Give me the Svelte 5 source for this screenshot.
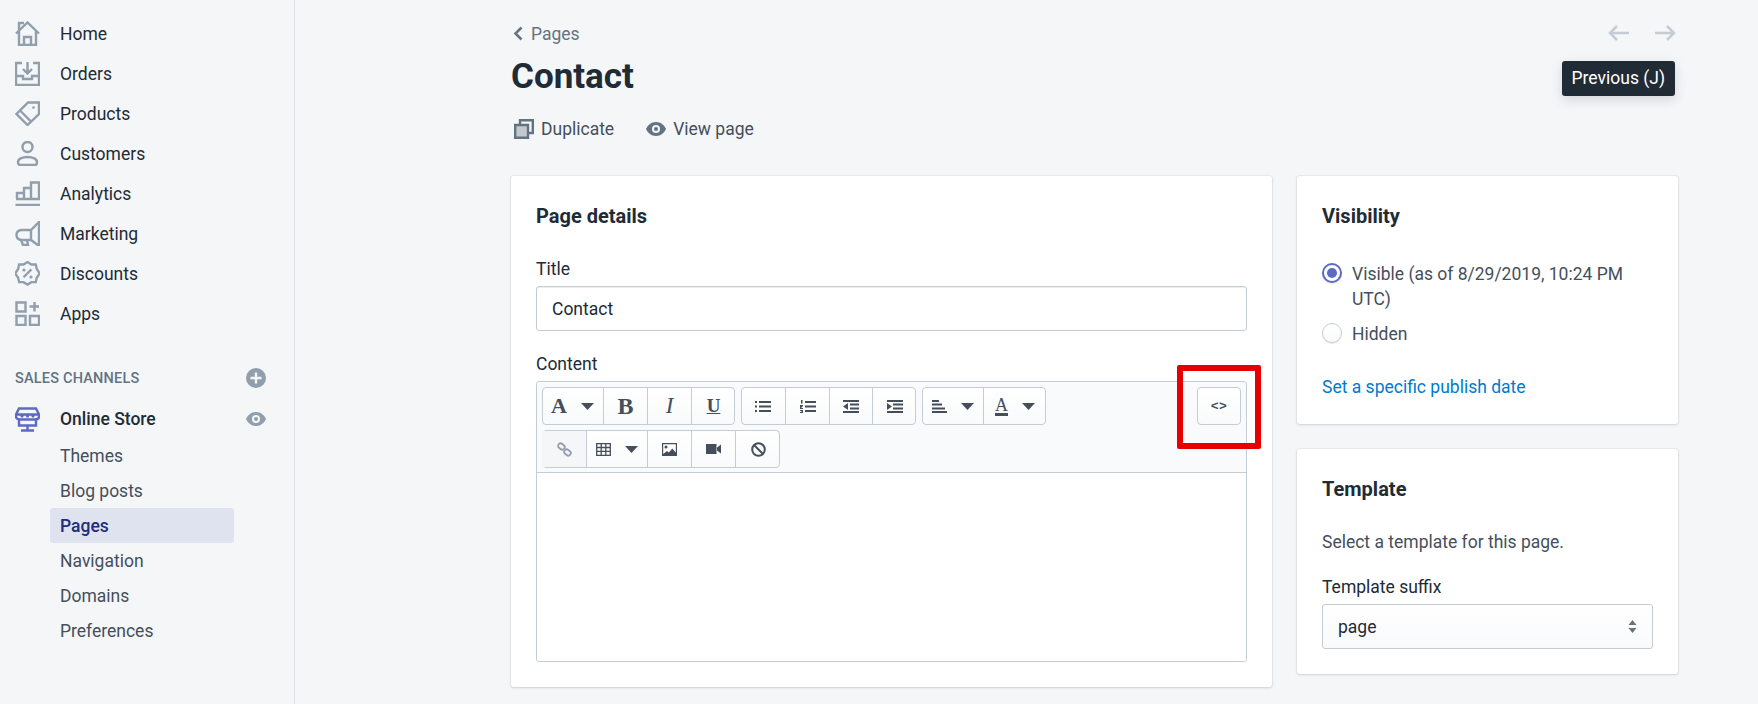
<script lang="ts">
	const navItems = [
		{ label: 'Home', icon: 'home' },
		{ label: 'Orders', icon: 'orders' },
		{ label: 'Products', icon: 'products' },
		{ label: 'Customers', icon: 'customers' },
		{ label: 'Analytics', icon: 'analytics' },
		{ label: 'Marketing', icon: 'marketing' },
		{ label: 'Discounts', icon: 'discounts' },
		{ label: 'Apps', icon: 'apps' }
	];

	const storeLinks = ['Themes', 'Blog posts', 'Pages', 'Navigation', 'Domains', 'Preferences'];
</script>

{#snippet caret()}
	<svg class="caret" width="13" height="7" viewBox="0 0 13 7"><path d="M0 0h13L6.500 7z" /></svg>
{/snippet}

<div class="page">
	<aside class="sidebar">
		<nav class="primary">
			{#each navItems as item}
				<div class="nav-item">
					<svg class="nav-icon" width="25" height="25" viewBox="0 0 25 25" fill="none">
						{#if item.icon === 'home'}
							<path d="M1 12.500 12.500 1.500 24 12.500M4 10v14h17V10M9 24v-8h7v8M4 9V2h5" />
						{:else if item.icon === 'orders'}
							<path d="M7 2H1v22h23V2h-6M1 15h7v3h9v-3h7M12.500 1v11M8 8l4.500 4.500L17 8" />
						{:else if item.icon === 'products'}
							<path d="M24 1.500H13L1.500 13 12.500 24 24 13zM5 9.500l11 11" />
							<circle cx="18.500" cy="6.500" r="1.300" fill="#919eab" stroke="none" />
						{:else if item.icon === 'customers'}
							<circle cx="12.500" cy="6" r="5" />
							<path d="M3 21c0-3 4-5 9.500-5s9.500 2 9.500 5c0 2-1 3-2 3H5c-1 0-2-1-2-3z" />
						{:else if item.icon === 'analytics'}
							<path d="M2 18v-6h7v6M9 18V7h7v11M16 18V1.500h8V18M1 18h24M0.500 24h24.500" />
						{:else if item.icon === 'marketing'}
							<path d="M24 1v24L16 19H6c-6-1-6-9 0-10h10zM16 9v10M6 19l2 5h5l-1-5" />
						{:else if item.icon === 'discounts'}
							<path d="M12.500 1l4 2.500h4.500l1 4.500 3 4.500-3 4.500-1 4.500h-4.500l-4 2.500-4-2.500H4l-1-4.500-3-4.500 3-4.500 1-4.500h4.500zM8.500 16.500l8-8" transform="translate(0.200 0.100) scale(.98)" />
							<circle cx="9" cy="9" r="1.600" fill="#919eab" stroke="none" />
							<circle cx="16" cy="16" r="1.600" fill="#919eab" stroke="none" />
						{:else}
							<path d="M1.500 1.500h9v9h-9zM1.500 15h9v9h-9zM15 15h9v9h-9zM19.500 1v9.500M14.500 5.500H24" />
						{/if}
					</svg>
					<span>{item.label}</span>
				</div>
			{/each}
		</nav>

		<div class="channels-head">
			<span>Sales channels</span>
			<svg width="20" height="20" viewBox="0 0 20 20">
				<circle cx="10" cy="10" r="10" fill="#919eab" />
				<path d="M10 4.500v11M4.500 10h11" stroke="#f4f6f8" stroke-width="2.400" />
			</svg>
		</div>

		<div class="store-row">
			<svg class="store-icon" width="25" height="25" viewBox="0 0 25 25" fill="none">
				<path d="M4 1.500h17l3 6v2c0 2-2 3-4 3H5c-2 0-4-1-4-3v-2zM1 7.500h23M4 12v6.500h17V12M12.500 18.500v5M6 23.500h13" />
				<path d="M5 8h4l-1 2.500H6zM10.500 8h4l-1 2.500h-2zM16 8h4l-1 2.500h-2z" fill="#5c6ac4" stroke="none" />
			</svg>
			<span class="store-name">Online Store</span>
			<svg width="20" height="14" viewBox="0 0 20 14">
				<path d="M10 0C5 0 1.500 3.500 0 7c1.500 3.500 5 7 10 7s8.500-3.500 10-7c-1.500-3.500-5-7-10-7z" fill="#919eab" />
				<circle cx="10" cy="7" r="4" fill="#f4f6f8" />
				<circle cx="10" cy="7" r="2" fill="#919eab" />
			</svg>
		</div>

		<ul class="store-links">
			{#each storeLinks as link}
				<li class:selected={link === 'Pages'}>{link}</li>
			{/each}
		</ul>
	</aside>

	<main class="content">
		<header class="page-head">
			<div class="breadcrumb-row">
				<div class="breadcrumb">
					<svg width="10" height="15" viewBox="0 0 10 15" fill="none"><path d="M8.500 1.500 2.500 7.500l6 6" stroke="#637381" stroke-width="2.500" /></svg>
					<span>Pages</span>
				</div>
				<div class="pager">
					<svg width="21" height="16" viewBox="0 0 21 16" fill="none"><path d="M21 8H2M9 1 2 8l7 7" /></svg>
					<svg width="21" height="16" viewBox="0 0 21 16" fill="none"><path d="M0 8h19M12 1l7 7-7 7" /></svg>
				</div>
			</div>
			<h1>Contact</h1>
			<div class="actions">
				<div class="action">
					<svg width="20" height="20" viewBox="0 0 20 20" fill="none" stroke="#637381" stroke-width="2.400">
						<path d="M6 5V1.200h12.800V14H15" />
						<path d="M1.200 6H14v12.800H1.200z" fill="#637381" fill-opacity=".35" />
					</svg>
					<span>Duplicate</span>
				</div>
				<div class="action">
					<svg width="20" height="14" viewBox="0 0 20 14">
						<path d="M10 0C5 0 1.500 3.500 0 7c1.500 3.500 5 7 10 7s8.500-3.500 10-7c-1.500-3.500-5-7-10-7z" fill="#637381" />
						<circle cx="10" cy="7" r="4" fill="#f4f6f8" />
						<circle cx="10" cy="7" r="2" fill="#637381" />
					</svg>
					<span>View page</span>
				</div>
			</div>
		</header>

		<div class="columns">
			<section class="card main-card">
				<h2>Page details</h2>
				<label class="field-label" for="title">Title</label>
				<div class="input" id="title">Contact</div>
				<div class="field-label content-label">Content</div>

				<div class="editor">
					<div class="toolbar">
						<div class="tool-rows">
							<div class="tool-row">
								<div class="group">
									<div class="tool w61 serif-tool"><b>A</b>{@render caret()}</div>
									<div class="tool w44 serif-tool b">B</div>
									<div class="tool w44 serif-tool i">I</div>
									<div class="tool w44 serif-tool u">U</div>
								</div>
								<div class="group">
									<div class="tool w44">
										<svg width="16" height="13" viewBox="0 0 16 13" fill="#454f5b"><path d="M0 1h2v2H0zM0 5.500h2v2H0zM0 10h2v2H0zM4 1h12v2H4zM4 5.500h12v2H4zM4 10h12v2H4z" /></svg>
									</div>
									<div class="tool w44">
										<svg width="16" height="13" viewBox="0 0 16 13" fill="#454f5b"><path d="M5 1h11v2H5zM5 5.500h11v2H5zM5 10h11v2H5zM1 0h1.500v3.500H1zM0 5h3v1L1 8h2v1H0zM0 10h3v3H0v-1h2v-.5H1v-.5h1V11H0z" /></svg>
									</div>
									<div class="tool w43">
										<svg width="16" height="13" viewBox="0 0 16 13" fill="#454f5b"><path d="M0 0h16v2H0zM7 3.500h9v2H7zM7 7.500h9v2H7zM0 11h16v2H0zM5 3v7L0 6.500z" /></svg>
									</div>
									<div class="tool w44">
										<svg width="16" height="13" viewBox="0 0 16 13" fill="#454f5b"><path d="M0 0h16v2H0zM6 3.500h10v2H6zM6 7.500h10v2H6zM0 11h16v2H0zM0 3v7l5-3.500z" /></svg>
									</div>
								</div>
								<div class="group">
									<div class="tool w61">
										<svg width="15" height="13" viewBox="0 0 15 13" fill="#454f5b"><path d="M0 0h7v2H0zM0 3.500h10v2H0zM0 7.500h13v2H0zM0 11h15v2H0z" /></svg>
										{@render caret()}
									</div>
									<div class="tool w63 serif-tool color"><span class="color-a">A</span>{@render caret()}</div>
								</div>
							</div>
							<div class="tool-row">
								<div class="group">
									<div class="tool w44 disabled">
										<svg width="15" height="15" viewBox="0 0 15 15" fill="none" stroke="#919eab" stroke-width="1.800"><rect x=".9" y="2" width="7" height="5" rx="2.500" transform="rotate(40 4.400 4.500)" /><rect x="7" y="8" width="7" height="5" rx="2.500" transform="rotate(40 10.500 10.500)" /></svg>
									</div>
									<div class="tool w61">
										<svg width="15" height="13" viewBox="0 0 15 13" fill="none" stroke="#454f5b" stroke-width="1.300"><path d="M.7.700h13.600v11.600H.7zM.7 4.500h13.600M.7 8.400h13.600M5.200.7v11.600M9.800.7v11.600" /></svg>
										{@render caret()}
									</div>
									<div class="tool w44">
										<svg width="15" height="13" viewBox="0 0 15 13"><path d="M0 0h15v13H0z" fill="#454f5b" /><path d="M1.200 1.200h12.600v8.300l-3.500-4-3.500 4-1.800-1.500-3.800 3z" fill="#fff" /><circle cx="4" cy="4" r="1.500" fill="#454f5b" /></svg>
									</div>
									<div class="tool w44">
										<svg width="15" height="10" viewBox="0 0 15 10" fill="#454f5b"><path d="M0 0h10.500v10H0zM11 3.500 15 .5v9l-4-3z" /></svg>
									</div>
									<div class="tool w45">
										<svg width="15" height="15" viewBox="0 0 15 15" fill="none" stroke="#454f5b" stroke-width="2"><circle cx="7.500" cy="7.500" r="6.300" /><path d="M3 3l9 9" /></svg>
									</div>
								</div>
							</div>
						</div>
						<div class="group code-group">
							<div class="tool w44 code">&lt;&gt;</div>
						</div>
					</div>
					<div class="editor-body"></div>
				</div>
			</section>

			<div class="side">
				<section class="card">
					<h2>Visibility</h2>
					<div class="radio-list">
						<div class="radio-row">
							<span class="radio checked"></span>
							<span class="radio-text">Visible (as of 8/29/2019, 10:24 PM UTC)</span>
						</div>
						<div class="radio-row">
							<span class="radio"></span>
							<span class="radio-text">Hidden</span>
						</div>
					</div>
					<a class="link" href="#top">Set a specific publish date</a>
				</section>

				<section class="card">
					<h2>Template</h2>
					<p class="hint">Select a template for this page.</p>
					<div class="field-label">Template suffix</div>
					<div class="select">
						<span>page</span>
						<svg width="9" height="13" viewBox="0 0 9 13" fill="#637381"><path d="M4.500 0 8.500 5h-8zM4.500 13 .5 8h8z" /></svg>
					</div>
				</section>
			</div>
		</div>

		<div class="tooltip">Previous (J)</div>
		<div class="highlight"></div>
	</main>
</div>

<style>
	:global(body) {
		margin: 0;
		background: #f4f6f8;
	}

	.page {
		display: flex;
		height: 704px;
		overflow: hidden;
		font-family: Roboto, 'Liberation Sans', sans-serif;
		font-size: 17.500px;
		color: #212b36;
	}

	.sidebar {
		width: 294px;
		flex-shrink: 0;
		border-right: 1px solid #dfe3e8;
		padding-top: 13px;
	}

	.nav-item {
		display: flex;
		align-items: center;
		gap: 20px;
		height: 40px;
		padding-left: 15px;
		color: #212b36;
	}

	.nav-item span {
		padding-top: 2px;
	}

	.nav-icon {
		stroke: #919eab;
		stroke-width: 2.400;
	}

	.channels-head {
		display: flex;
		justify-content: space-between;
		align-items: center;
		height: 20px;
		margin-top: 35px;
		padding: 0 28px 0 15px;
		font-size: 14.500px;
		font-weight: 500;
		letter-spacing: 0.2px;
		text-transform: uppercase;
		color: #637381;
	}

	.store-row {
		display: flex;
		align-items: center;
		height: 40px;
		margin-top: 11px;
		padding: 0 28px 0 15px;
	}

	.store-icon {
		stroke: #5c6ac4;
		stroke-width: 2.400;
		margin-right: 20px;
	}

	.store-name {
		flex: 1;
		font-weight: 500;
	}

	.store-links {
		list-style: none;
		margin: -1px 0 0 50px;
		padding: 0;
		width: 184px;
	}

	.store-links li {
		height: 35px;
		line-height: 37px;
		padding-left: 10px;
		color: #454f5b;
		border-radius: 3px;
	}

	.store-links li.selected {
		background: #dfe3f0;
		color: #202e78;
		font-weight: 500;
	}

	.content {
		position: relative;
		flex: 1;
		padding: 0 80px 0 216px;
	}

	.page-head {
		height: 176px;
	}

	.breadcrumb-row {
		display: flex;
		justify-content: space-between;
		align-items: center;
		height: 20px;
		padding-top: 23px;
	}

	.breadcrumb {
		display: flex;
		align-items: center;
		gap: 8px;
		padding-left: 2px;
		color: #637381;
	}

	.breadcrumb span {
		padding-top: 2px;
	}

	.pager {
		display: flex;
		gap: 26px;
		margin-right: 2px;
	}

	.pager svg {
		stroke: #c4cdd5;
		stroke-width: 2.500;
	}

	h1 {
		margin: 0;
		height: 45px;
		padding-top: 11px;
		line-height: 45px;
		font-size: 35px;
		font-weight: 700;
	}

	.actions {
		display: flex;
		gap: 32px;
		margin-top: 15px;
		padding-left: 3px;
		color: #454f5b;
	}

	.action {
		display: flex;
		align-items: center;
		gap: 7px;
		height: 30px;
	}

	.columns {
		display: flex;
		align-items: flex-start;
		gap: 25px;
	}

	.card {
		box-sizing: border-box;
		padding: 25px;
		background: #fff;
		border-radius: 3px;
		box-shadow: 0 0 0 1px rgba(63, 63, 68, 0.05), 0 1px 3px 0 rgba(63, 63, 68, 0.15);
	}

	.main-card {
		flex: 1;
		height: 511px;
	}

	.side {
		display: flex;
		flex-direction: column;
		gap: 25px;
		width: 381px;
		flex-shrink: 0;
	}

	h2 {
		margin: 0 0 25px;
		height: 30px;
		line-height: 30px;
		font-size: 20px;
		font-weight: 700;
	}

	.field-label {
		display: block;
		height: 25px;
		line-height: 27px;
		color: #212b36;
		margin-bottom: 5px;
	}

	.input {
		box-sizing: border-box;
		height: 45px;
		line-height: 45px;
		padding: 0 15px;
		border: 1px solid #c4cdd5;
		border-radius: 3px;
		box-shadow: inset 0 1px 0 rgba(102, 113, 123, 0.12);
	}

	.content-label {
		margin-top: 20px;
		margin-bottom: 5px;
	}

	.editor {
		box-sizing: border-box;
		height: 281px;
		border: 1px solid #c4cdd5;
		border-radius: 3px;
		display: flex;
		flex-direction: column;
	}

	.toolbar {
		box-sizing: border-box;
		display: flex;
		justify-content: space-between;
		height: 91px;
		padding: 5px 5px 0;
		background: #f9fafb;
		border-bottom: 1px solid #c4cdd5;
		border-radius: 3px 3px 0 0;
	}

	.tool-rows {
		display: flex;
		flex-direction: column;
		gap: 5px;
	}

	.tool-row {
		display: flex;
		gap: 6px;
	}

	.group {
		display: flex;
		height: 38px;
		box-sizing: border-box;
		border: 1px solid #c4cdd5;
		border-radius: 4px;
		background: linear-gradient(#fff, #f9fafb);
	}

	.tool {
		display: flex;
		align-items: center;
		justify-content: center;
		gap: 14px;
		box-sizing: border-box;
		border-left: 1px solid #c4cdd5;
		color: #454f5b;
	}

	.tool:first-child {
		border-left: 0;
		margin-left: -1px;
	}

	.tool:last-child {
		margin-right: -1px;
	}

	.w43 { width: 43px; }
	.w44 { width: 44px; }
	.w45 { width: 45px; }
	.w61 { width: 61px; }
	.w63 { width: 63px; }

	.disabled {
		background: #f4f6f8;
	}

	.serif-tool {
		font-family: 'Liberation Serif', serif;
		font-size: 22px;
	}

	.serif-tool.b {
		font-weight: 700;
		font-size: 24px;
	}

	.serif-tool.i {
		font-style: italic;
		font-size: 23px;
	}

	.serif-tool.u {
		text-decoration: underline;
		font-weight: 700;
		font-size: 19px;
	}

	.color-a {
		font-size: 18px;
		border-bottom: 3px solid #454f5b;
		line-height: 16px;
	}

	.caret {
		fill: #454f5b;
	}

	.code {
		font-family: 'Liberation Mono', monospace;
		font-size: 13px;
		letter-spacing: 0.5px;
		font-weight: 700;
	}

	.editor-body {
		flex: 1;
		background: #fff;
		border-radius: 0 0 3px 3px;
	}

	.radio-list {
		display: flex;
		flex-direction: column;
		gap: 10px;
		margin-top: 30px;
	}

	.radio-row {
		display: flex;
		gap: 10px;
		line-height: 25px;
		color: #454f5b;
	}

	.radio-text {
		padding-top: 1px;
		margin-bottom: -1px;
	}

	.radio {
		position: relative;
		box-sizing: border-box;
		flex-shrink: 0;
		width: 20px;
		height: 20px;
		margin-top: 2px;
		border-radius: 50%;
		border: 1px solid #c4cdd5;
		background: linear-gradient(#fff, #f9fafb);
		box-shadow: 0 1px 0 rgba(22, 29, 37, 0.1);
	}

	.radio.checked {
		border: 2px solid #5c6ac4;
		background: #fff;
	}

	.radio.checked::after {
		content: '';
		position: absolute;
		left: 3px;
		top: 3px;
		width: 10px;
		height: 10px;
		border-radius: 50%;
		background: #5c6ac4;
	}

	.link {
		display: block;
		margin-top: 28px;
		height: 25px;
		line-height: 27px;
		color: #007ace;
		text-decoration: none;
	}

	.hint {
		margin: 0 0 20px;
		height: 25px;
		line-height: 27px;
		color: #454f5b;
	}

	.select {
		display: flex;
		justify-content: space-between;
		align-items: center;
		box-sizing: border-box;
		height: 45px;
		padding: 0 15px;
		border: 1px solid #c4cdd5;
		border-radius: 3px;
		background: linear-gradient(#fff, #f9fafb);
	}

	.tooltip {
		position: absolute;
		top: 61px;
		right: 83px;
		padding: 0 10px;
		height: 35px;
		line-height: 35px;
		border-radius: 3px;
		background: #212b36;
		color: #fff;
		box-shadow: 0 4px 12px rgba(33, 43, 54, 0.15);
	}

	.highlight {
		position: absolute;
		left: 882px;
		top: 365px;
		width: 84px;
		height: 84px;
		box-sizing: border-box;
		border: 6px solid #e60000;
		border-radius: 2px;
	}
</style>
